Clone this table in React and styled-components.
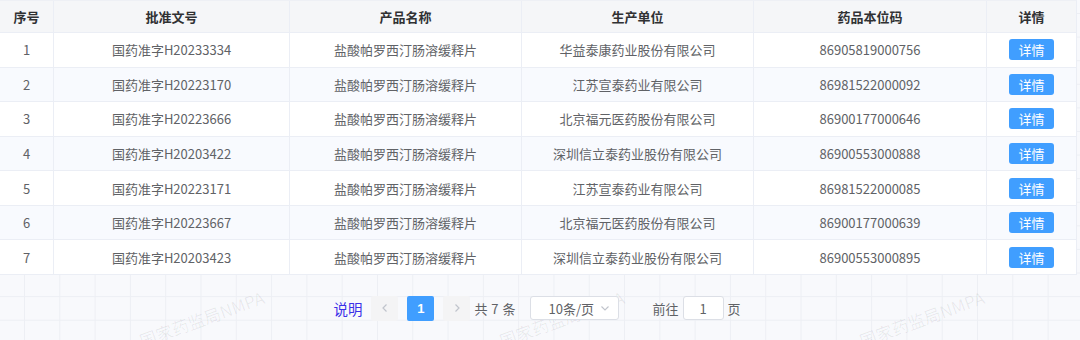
import React from "react";
import styled, { createGlobalStyle } from "styled-components";

const GlobalStyle = createGlobalStyle`
  html, body {
    margin: 0;
    padding: 0;
  }
  body {
    font-family: "Noto Sans CJK SC", "Microsoft YaHei", sans-serif;
    background-color: #f8f9fc;
    background-image:
      linear-gradient(to right, #edeff4 1px, transparent 1px),
      linear-gradient(to bottom, #edeff4 1px, transparent 1px);
    background-size: 35.3px 23.6px;
    background-position: 24px 13px;
  }
`;

const COLS = "54px 236px 232px 232px 233px 89px";

const Page = styled.div`
  position: relative;
  width: 1080px;
  height: 340px;
  overflow: hidden;
`;

const Table = styled.div`
  position: relative;
  z-index: 1;
  width: 1077px;
  border-top: 1px solid #eef0f5;
  box-sizing: border-box;
  border-right: 1px solid #ebeef5;
`;

const Row = styled.div`
  display: grid;
  grid-template-columns: ${COLS};
  height: ${(p) => (p.$head ? "32px" : "34.57px")};
  box-sizing: border-box;
  border-bottom: 1px solid #ebeef5;
  background: ${(p) => (p.$head ? "#f5f6f8" : p.$stripe ? "#f8fafe" : "#ffffff")};
`;

const Cell = styled.div`
  display: flex;
  align-items: center;
  justify-content: center;
  border-right: 1px solid #ebeef5;
  font-size: 13px;
  color: ${(p) => (p.$head ? "#303133" : "#606266")};
  font-weight: ${(p) => (p.$head ? 700 : 400)};
  white-space: nowrap;
  &:last-child {
    border-right: none;
  }
`;

const DetailButton = styled.button`
  width: 45px;
  height: 21px;
  padding: 0;
  border: none;
  border-radius: 3px;
  background: #409eff;
  color: #ffffff;
  font-family: inherit;
  font-size: 13px;
  line-height: 21px;
  cursor: pointer;
`;

const Footer = styled.div`
  position: relative;
  z-index: 1;
  display: flex;
  justify-content: center;
  align-items: center;
  padding: 21px 0 0 0;
  padding-right: 6px;
  height: 25px;
`;

const Explain = styled.a`
  font-size: 14.5px;
  color: #3b30e8;
  margin-right: 9px;
  cursor: pointer;
`;

const PageBtn = styled.button`
  width: 27px;
  height: 25px;
  padding: 0;
  border: none;
  border-radius: 2px;
  margin-right: ${(p) => p.$mr || 0}px;
  background: ${(p) => (p.$active ? "#409eff" : "#f4f4f5")};
  color: ${(p) => (p.$active ? "#ffffff" : "#c0c4cc")};
  font-family: "Liberation Sans", Arial, sans-serif;
  font-weight: 700;
  font-size: 13px;
  display: flex;
  align-items: center;
  justify-content: center;
`;

const Text = styled.span`
  font-size: 13px;
  color: #606266;
  margin-right: ${(p) => p.$mr || 0}px;
  word-spacing: ${(p) => p.$ws || 0}px;
`;

const Select = styled.div`
  width: 89px;
  height: 24px;
  box-sizing: border-box;
  border: 1px solid #dcdfe6;
  border-radius: 3px;
  background: #ffffff;
  display: flex;
  align-items: center;
  justify-content: space-between;
  padding: 0 8px 0 18px;
  margin-right: 34px;
  font-size: 13px;
  color: #606266;
`;

const Jumper = styled.div`
  width: 41px;
  height: 24px;
  box-sizing: border-box;
  border: 1px solid #dcdfe6;
  border-radius: 3px;
  background: #ffffff;
  display: flex;
  align-items: center;
  justify-content: center;
  margin-right: 4px;
  font-size: 13px;
  color: #606266;
`;

const Watermark = styled.span`
  position: absolute;
  left: ${(p) => p.$x}px;
  top: ${(p) => p.$y}px;
  transform: rotate(-20deg);
  font-size: 17px;
  color: rgba(0, 0, 0, 0.065);
  white-space: nowrap;
  pointer-events: none;
  user-select: none;
`;

const rows = [
  ["1", "国药准字H20233334", "华益泰康药业股份有限公司", "86905819000756"],
  ["2", "国药准字H20223170", "江苏宣泰药业有限公司", "86981522000092"],
  ["3", "国药准字H20223666", "北京福元医药股份有限公司", "86900177000646"],
  ["4", "国药准字H20203422", "深圳信立泰药业股份有限公司", "86900553000888"],
  ["5", "国药准字H20223171", "江苏宣泰药业有限公司", "86981522000085"],
  ["6", "国药准字H20223667", "北京福元医药股份有限公司", "86900177000639"],
  ["7", "国药准字H20203423", "深圳信立泰药业股份有限公司", "86900553000895"],
];

const Chevron = ({ dir }) => (
  <svg width="10" height="10" viewBox="0 0 10 10" fill="none">
    <path
      d={dir === "left" ? "M6.5 1.5 L3 5 L6.5 8.5" : "M3.5 1.5 L7 5 L3.5 8.5"}
      stroke="#c0c4cc"
      strokeWidth="1.2"
    />
  </svg>
);

const Down = () => (
  <svg width="10" height="8" viewBox="0 0 10 8" fill="none">
    <path d="M1.5 2.5 L5 6 L8.5 2.5" stroke="#c0c4cc" strokeWidth="1.1" />
  </svg>
);

export default function App() {
  return (
    <Page>
      <GlobalStyle />
      {[136, 496, 856].map((x) => (
        <Watermark key={x} $x={x} $y={306}>
          国家药监局NMPA
        </Watermark>
      ))}
      <Table>
        <Row $head>
          <Cell $head>序号</Cell>
          <Cell $head>批准文号</Cell>
          <Cell $head>产品名称</Cell>
          <Cell $head>生产单位</Cell>
          <Cell $head>药品本位码</Cell>
          <Cell $head>详情</Cell>
        </Row>
        {rows.map((r, i) => (
          <Row key={r[0]} $stripe={i % 2 === 1}>
            <Cell>{r[0]}</Cell>
            <Cell>{r[1]}</Cell>
            <Cell>盐酸帕罗西汀肠溶缓释片</Cell>
            <Cell>{r[2]}</Cell>
            <Cell>{r[3]}</Cell>
            <Cell>
              <DetailButton>详情</DetailButton>
            </Cell>
          </Row>
        ))}
      </Table>
      <Footer>
        <Explain>说明</Explain>
        <PageBtn $mr={9}>
          <Chevron dir="left" />
        </PageBtn>
        <PageBtn $active $mr={9}>
          1
        </PageBtn>
        <PageBtn $mr={4}>
          <Chevron dir="right" />
        </PageBtn>
        <Text $mr={14} $ws={1}>
          共 7 条
        </Text>
        <Select>
          <span>10条/页</span>
          <Down />
        </Select>
        <Text $mr={4}>前往</Text>
        <Jumper>1</Jumper>
        <Text>页</Text>
      </Footer>
    </Page>
  );
}
